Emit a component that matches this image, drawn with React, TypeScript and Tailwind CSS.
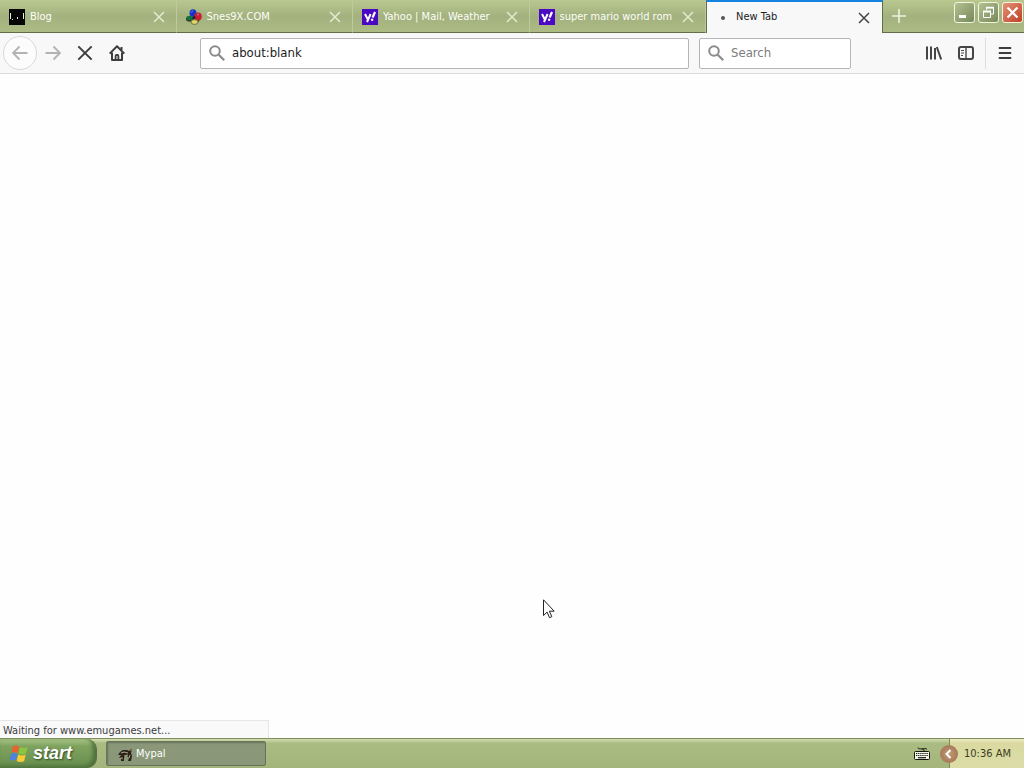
import React from "react";

type Tab = { title: string; icon: React.ReactNode };

const iconBox = "h-4 w-4 shrink-0";

function BlogIcon() {
  return (
    <svg className={iconBox} viewBox="0 0 16 16" aria-hidden="true">
      <rect width="16" height="16" fill="#050505" />
      <path d="M1 4h1v6H1zM14 4h1v6h-1zM8 8h1v2H8zM3 10h1v1H3z" fill="#e8e8e8" />
    </svg>
  );
}

function SnesIcon() {
  return (
    <svg className={iconBox} viewBox="0 0 16 16" aria-hidden="true">
      <ellipse cx="4" cy="10" rx="4" ry="2.6" fill="#26352b" />
      <circle cx="11.5" cy="11" r="2" fill="#2d3a2a" />
      <ellipse cx="7" cy="4" rx="3.5" ry="3.8" fill="#1434c8" />
      <ellipse cx="12" cy="7.5" rx="3.8" ry="4" fill="#c91f2b" />
      <ellipse cx="3.6" cy="9" rx="3.2" ry="2.3" fill="#14733c" />
      <ellipse cx="8.5" cy="13" rx="3.5" ry="2.4" fill="#e2d568" stroke="#4d512b" strokeWidth=".7" />
      <path d="M5 3.5l2-2M11 6l2-1" stroke="#8298ff" strokeWidth="1" />
      <circle cx="8" cy="8.5" r="1.6" fill="#251f35" />
    </svg>
  );
}

function YahooIcon() {
  return (
    <svg className={iconBox} viewBox="0 0 16 16" aria-hidden="true">
      <rect width="16" height="16" fill="#4b08c2" />
      <path d="M3 5l2.6 5M8.6 5L5 13" stroke="#fff" strokeWidth="2" fill="none" />
      <path d="M13 3l-2.400 5.500" stroke="#fff" strokeWidth="2.2" />
      <circle cx="10.1" cy="10.7" r="1.2" fill="#fff" />
    </svg>
  );
}

function CrossIcon({ className }: { className: string }) {
  return (
    <svg className={className} viewBox="0 0 12 12" fill="none" stroke="currentColor" aria-hidden="true">
      <path d="M1 1l10 10M11 1L1 11" strokeWidth="1.5" />
    </svg>
  );
}

function SearchIcon() {
  return (
    <svg className="h-4 w-4 shrink-0" viewBox="0 0 16 16" fill="none" stroke="#8b8b8b" aria-hidden="true">
      <circle cx="6" cy="6" r="4.8" strokeWidth="2" />
      <path d="M9.7 9.7l5.5 5.5" strokeWidth="2.2" />
    </svg>
  );
}

function ArrowIcon({ flip }: { flip?: boolean }) {
  return (
    <svg className="h-4 w-4" viewBox="0 0 16 16" fill="none" stroke="#b3b3b3" strokeWidth="1.9" aria-hidden="true">
      <path d={flip ? "M.5 8H15M8.5 1.5L15 8l-6.5 6.5" : "M15.5 8H1M7.5 1.5L1 8l6.5 6.5"} />
    </svg>
  );
}

function HomeIcon() {
  return (
    <svg className="h-4 w-4" viewBox="0 0 16 16" fill="none" stroke="#3d3d3f" strokeWidth="2" aria-hidden="true">
      <path d="M.7 8.6L8 1.3l7.3 7.3" strokeLinejoin="round" />
      <path d="M3 7.5V15h10V7.5" strokeLinejoin="round" />
      <path d="M12.5 2v3" />
      <path d="M6.600 15v-4a1 1 0 011-1h.8a1 1 0 011 1v4" strokeWidth="1.800" />
    </svg>
  );
}

function LibraryIcon() {
  return (
    <svg className="h-4 w-4" viewBox="0 0 16 16" fill="none" stroke="#454547" strokeWidth="2" aria-hidden="true">
      <path d="M1 1.500v13M5 1.500v13M9 3v11.500" />
      <path d="M10.800 2l4.400 12.500" />
    </svg>
  );
}

function SidebarIcon() {
  return (
    <svg className="h-4 w-4" viewBox="0 0 16 16" fill="none" stroke="#454547" aria-hidden="true">
      <rect x="1" y="2" width="14" height="12" rx="2" strokeWidth="2" />
      <path d="M8 2v12" strokeWidth="1.4" />
      <path d="M3 5.5h3M3 8h3M3 10.500h2" strokeWidth="1" />
    </svg>
  );
}

function WindowsFlag() {
  return (
    <svg className="h-5 w-5" viewBox="0 0 20 20" aria-hidden="true">
      <path d="M4 2.200c2-1 4.200-.9 6.200.3L8.700 9c-2-1.200-4.200-1.200-6.300-.2z" fill="#e8632f" />
      <path d="M10.900 3c2.100 1.100 4.700 1.200 7.600.2l-1.600 6.600c-2.500 1-5.200.9-7.500-.2z" fill="#8cc63f" />
      <path d="M2.200 9.700c2-.9 4.200-.9 6.300.2L6.900 16.700c-2-1.200-4.200-1.200-6.300-.2z" fill="#4d83dd" />
      <path d="M9.200 10.500c2.300 1.100 4.900 1.200 7.500.2l-1.600 6.600c-2.500 1-5.200.8-7.400-.2z" fill="#f7cc35" />
    </svg>
  );
}

function MypalIcon() {
  return (
    <svg className="h-4 w-4 shrink-0" viewBox="0 0 16 16" aria-hidden="true">
      <path d="M2 5l3-2 4 0 2 1 2-2 1 1-1 3 1 3-1 5h-3l1-3-2-2-2 0-1 2v3H3v-2l2-2-4 1 2-3-3 0z" fill="#29231c" />
      <path d="M3 6l3-1 4 1M6 9l4-1M11 11l1-3" stroke="#d9c9a4" strokeWidth=".8" fill="none" />
      <path d="M12 3l2 1M3 11l2 1" stroke="#c78b4b" strokeWidth=".8" />
    </svg>
  );
}

function KeyboardIcon() {
  return (
    <svg className="h-4 w-4" viewBox="0 0 16 16" aria-hidden="true">
      <path d="M4 1.500c0 2 2 1 4 1.500s2 0 2 2M8 2.500c2 1 4-1 5 1" fill="none" stroke="#1b1e14" />
      <rect x=".5" y="5.500" width="15" height="8" rx="1" fill="#f3f5e8" stroke="#15170f" />
      <path d="M2 7.500h12M2 9.500h12" stroke="#15170f" strokeWidth="1.200" strokeDasharray="1.300 .8" />
      <path d="M4 11.700h8" stroke="#15170f" strokeWidth="1.200" />
    </svg>
  );
}

const tabs: Tab[] = [
  { title: "Blog", icon: <BlogIcon /> },
  { title: "Snes9X.COM", icon: <SnesIcon /> },
  { title: "Yahoo | Mail, Weather", icon: <YahooIcon /> },
  { title: "super mario world rom", icon: <YahooIcon /> },
];

const captionButton = "flex h-[21px] w-[21px] items-center justify-center rounded-[3px] border border-[#f3f5df]";
const toolButton = "flex h-8 w-8 items-center justify-center";

export default function App() {
  return (
    <div className="flex min-h-screen flex-col bg-[#fefefe] font-['DejaVu_Sans_Condensed','DejaVu_Sans',sans-serif] text-[11px] text-[#222]">
      <header className="flex h-[33px] bg-linear-to-b from-[#b9c88f] via-[#a3b17f] to-[#adbc84]">
        <div className="flex min-w-0 flex-1" role="tablist" aria-label="Browser tabs">
          <div className="flex w-[706px] min-w-0">
            {tabs.map((tab) => (
              <div
                key={tab.title}
                className="flex min-w-0 flex-1 items-center border-r border-b border-r-[#bdca9d] border-b-[#626d4b] pt-0.5 pr-[11px] pl-[9px] text-[#fdfef8]"
              >
                <button role="tab" aria-selected="false" className="flex min-w-0 flex-1 items-center gap-[5px]">
                  {tab.icon}
                  <span className="min-w-0 flex-1 overflow-hidden text-left whitespace-nowrap">{tab.title}</span>
                </button>
                <button aria-label={`Close ${tab.title}`} className="ml-1 text-[#e4ebce]">
                  <CrossIcon className="h-3 w-3" />
                </button>
              </div>
            ))}
          </div>
          <div className="flex w-[177px] min-w-0 items-center border-t-2 border-r border-l border-t-[#1583df] border-r-[#626d4b] border-l-[#626d4b] bg-[#f8f8f9] pr-3 pl-2">
            <button role="tab" aria-selected="true" className="flex min-w-0 flex-1 items-center gap-[5px]">
              <span className="flex h-4 w-4 items-center justify-center">
                <span className="h-1 w-1 rounded-full bg-[#55565a]" />
              </span>
              <span>New Tab</span>
            </button>
            <button aria-label="Close New Tab" className="text-[#434345]">
              <CrossIcon className="h-3 w-3" />
            </button>
          </div>
          <button aria-label="Open a new tab" className="flex w-8 items-center justify-center border-b border-[#626d4b] text-[#edf2dc]">
            <svg className="h-3.5 w-3.5" viewBox="0 0 14 14" stroke="currentColor" strokeWidth="1.6" aria-hidden="true">
              <path d="M7 0v14M0 7h14" />
            </svg>
          </button>
          <div className="flex-1 border-b border-[#626d4b]" />
        </div>
        <div className="flex items-start gap-[3px] border-b border-[#626d4b] pt-0.5 pr-px">
          <button aria-label="Minimize" className={`${captionButton} bg-linear-to-br from-[#b4c293] to-[#76885a]`}>
            <svg className="h-[19px] w-[19px]" viewBox="0 0 19 19" aria-hidden="true">
              <path d="M4 12h7v3H4z" fill="#fff" />
            </svg>
          </button>
          <button aria-label="Restore" className={`${captionButton} bg-linear-to-br from-[#b4c293] to-[#76885a]`}>
            <svg className="h-[19px] w-[19px]" viewBox="0 0 19 19" fill="none" stroke="#fff" aria-hidden="true">
              <path d="M7.500 7V5h7v6h-2.500" />
              <path d="M7 4.500h8" strokeWidth="1.500" />
              <path d="M4.500 8.500h7v6h-7z" />
              <path d="M4 8.500h8" strokeWidth="2" />
            </svg>
          </button>
          <button aria-label="Close" className={`${captionButton} bg-linear-to-br from-[#e59176] to-[#bd3e24]`}>
            <svg className="h-[19px] w-[19px]" viewBox="0 0 19 19" stroke="#fff" strokeWidth="2.200" aria-hidden="true">
              <path d="M4.500 4.500l10 10M14.500 4.500l-10 10" />
            </svg>
          </button>
        </div>
      </header>

      <nav className="flex h-[41px] items-center border-b border-[#dcdcdd] bg-[#f8f8f9] px-[3px]" aria-label="Navigation">
        <button aria-label="Back" className="flex h-[34px] w-[34px] items-center justify-center rounded-full border border-[#d9d9da] bg-[#fcfcfc]">
          <ArrowIcon />
        </button>
        <button aria-label="Forward" className={toolButton}>
          <ArrowIcon flip />
        </button>
        <button aria-label="Stop" className={`${toolButton} text-[#3d3d3f]`}>
          <CrossIcon className="h-4 w-4" />
        </button>
        <button aria-label="Home" className={toolButton}>
          <HomeIcon />
        </button>
        <div className="flex min-w-0 flex-1 items-center px-[67px]">
          <label className="flex h-[31px] min-w-0 flex-1 items-center gap-[7px] rounded-[2px] border border-[#b5b5b6] bg-white px-2">
            <SearchIcon />
            <input
              aria-label="Address"
              defaultValue="about:blank"
              className="min-w-0 flex-1 bg-transparent text-[13px] text-[#1b1b1c] outline-none"
            />
          </label>
          <label className="ml-2.5 flex h-[31px] w-[152px] items-center gap-[7px] rounded-[2px] border border-[#b5b5b6] bg-white px-2">
            <SearchIcon />
            <input
              aria-label="Search"
              placeholder="Search"
              className="min-w-0 flex-1 bg-transparent text-[13px] outline-none placeholder:text-[#7c7c7e]"
            />
          </label>
        </div>
        <button aria-label="Library" className={toolButton}>
          <LibraryIcon />
        </button>
        <button aria-label="Sidebars" className={toolButton}>
          <SidebarIcon />
        </button>
        <div className="ml-[3px] h-[31px] w-px bg-[#dededf]" />
        <button aria-label="Open menu" className="ml-[3px] flex h-8 w-8 items-center justify-center">
          <svg className="h-4 w-4" viewBox="0 0 16 16" stroke="#3d3d3f" strokeWidth="1.800" strokeLinecap="round" aria-hidden="true">
            <path d="M2.500 3h11M2.500 8h11M2.500 13h11" />
          </svg>
        </button>
      </nav>

      <main className="relative flex flex-1 flex-col justify-end">
        <svg className="absolute top-[525px] left-[543px] h-5 w-3" viewBox="0 0 12 20" aria-hidden="true">
          <path d="M.5.800v15.700l3.600-3.400 2.400 5.600 2.300-1-2.400-5.500h4.800z" fill="#fdfdfd" stroke="#222" />
        </svg>
        <p role="status" className="h-[18px] w-[269px] border-t border-r border-[#e6e6e7] bg-[#f9f9fa] pl-[3px] leading-5 text-[#3c3c3e]">
          Waiting for www.emugames.net...
        </p>
      </main>

      <footer className="flex h-[30px] items-stretch border-t border-[#7d8f5c] bg-linear-to-b from-[#d3deb0] via-[#abbc82] via-15% to-[#a4b57c]">
        <button className="flex w-[97px] items-center gap-1 rounded-r-[10px] border-r border-[#557340] bg-linear-to-b from-[#a9c488] via-[#7fa35f] via-25% to-[#668d4d] pl-[9px] shadow-[inset_-3px_-2px_4px_#4b6f39]">
          <WindowsFlag />
          <span className="font-['Liberation_Sans',sans-serif] text-[18px] font-bold text-white italic [text-shadow:1px_1px_2px_#2e4a21]">start</span>
        </button>
        <button className="my-0.5 ml-[9px] flex w-40 items-center gap-0.5 rounded-[2px] border border-[#68745a] bg-[#8a9879] pt-0.5 pl-[11px] text-white shadow-[inset_1px_1px_2px_#68745a]">
          <MypalIcon />
          <span>Mypal</span>
        </button>
        <div className="ml-auto flex items-center pr-[19px]">
          <KeyboardIcon />
        </div>
        <div className="flex w-[75px] items-center border-l border-[#7f8b58] bg-linear-to-b from-[#eeebc2] via-[#d9d9a0] via-15% to-[#dcdca8] text-[#3c3b20]">
          <button aria-label="Show hidden icons" className="-ml-2.5 flex h-[18px] w-[18px] shrink-0 items-center justify-center rounded-full bg-radial from-[#c39a75] to-[#9a6d4e]">
            <svg className="h-2.5 w-2.5" viewBox="0 0 10 10" fill="none" stroke="#fff" strokeWidth="2" aria-hidden="true">
              <path d="M6.500 1L2.500 5l4 4" />
            </svg>
          </button>
          <time className="ml-1.5 pt-0.5 whitespace-nowrap">10:36 AM</time>
        </div>
      </footer>
    </div>
  );
}
